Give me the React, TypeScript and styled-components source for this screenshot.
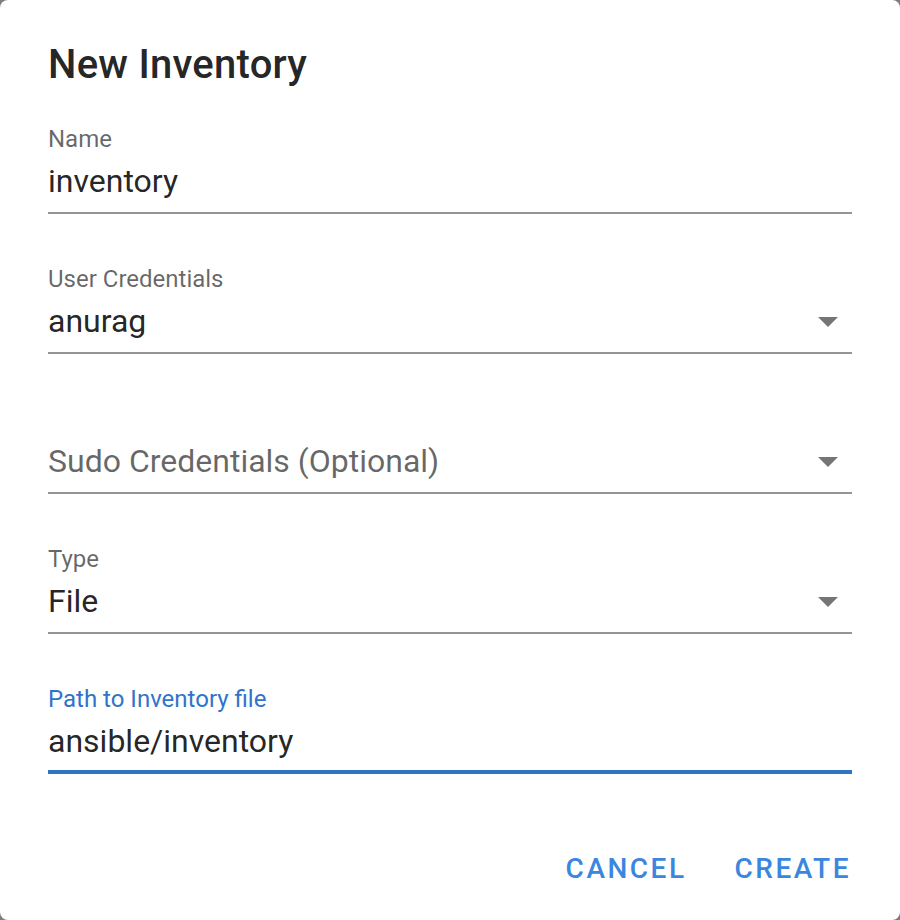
import styled, { createGlobalStyle } from 'styled-components';

const GlobalStyle = createGlobalStyle`
  html, body {
    margin: 0;
    padding: 0;
    background: #7d7d7d;
    font-family: Roboto, "Liberation Sans", Arial, sans-serif;
  }
`;

const Dialog = styled.div`
  width: 900px;
  height: 920px;
  box-sizing: border-box;
  background: #ffffff;
  border-radius: 8px;
  display: flex;
  flex-direction: column;
  overflow: hidden;
`;

const Title = styled.h2`
  margin: 0;
  padding: 33px 48px 0;
  font-size: 40px;
  font-weight: 500;
  line-height: 64px;
  letter-spacing: 0.25px;
  color: rgba(0, 0, 0, 0.87);
`;

const Form = styled.div`
  display: flex;
  flex-direction: column;
  gap: 51px;
  padding: 28px 48px 0;
`;

const Field = styled.div<{ $focused?: boolean }>`
  display: flex;
  flex-direction: column;
  padding-bottom: ${(p) => (p.$focused ? '9px' : '11px')};
  border-bottom: ${(p) =>
    p.$focused ? '4px solid #3074c9' : '2px solid rgba(0, 0, 0, 0.42)'};
`;

const Label = styled.label<{ $focused?: boolean }>`
  font-size: 24px;
  line-height: 28px;
  height: 28px;
  margin-bottom: 8px;
  color: ${(p) => (p.$focused ? '#3074c9' : 'rgba(0, 0, 0, 0.6)')};
`;

const Row = styled.div`
  display: flex;
  align-items: flex-start;
  height: 40px;
`;

const Value = styled.div<{ $placeholder?: boolean }>`
  flex: 1;
  font-size: 32px;
  line-height: 40px;
  color: ${(p) => (p.$placeholder ? 'rgba(0, 0, 0, 0.6)' : 'rgba(0, 0, 0, 0.87)')};
`;

const Arrow = styled.svg`
  width: 48px;
  height: 48px;
  margin-top: -4px;
  margin-bottom: -4px;
  flex: none;
`;

const Actions = styled.div`
  display: flex;
  justify-content: flex-end;
  gap: 16px;
  padding: 59px 33px 0 0;
`;

const TextButton = styled.button`
  height: 72px;
  padding: 0 16px;
  border: none;
  background: transparent;
  font-family: Roboto, "Liberation Sans", Arial, sans-serif;
  font-size: 28px;
  font-weight: 500;
  line-height: 72px;
  letter-spacing: 2.5px;
  text-transform: uppercase;
  color: #3b86de;
  cursor: pointer;
`;

const MenuDown = () => (
  <Arrow viewBox="0 0 24 24">
    <path d="M7 10l5 5 5-5z" fill="rgba(0,0,0,0.54)" />
  </Arrow>
);

type FieldDef = {
  label: string;
  value: string;
  select?: boolean;
  focused?: boolean;
  placeholder?: boolean;
};

const fields: FieldDef[] = [
  { label: 'Name', value: 'inventory' },
  { label: 'User Credentials', value: 'anurag', select: true },
  { label: '', value: 'Sudo Credentials (Optional)', select: true, placeholder: true },
  { label: 'Type', value: 'File', select: true },
  { label: 'Path to Inventory file', value: 'ansible/inventory', focused: true },
];

export default function App() {
  return (
    <>
      <GlobalStyle />
      <Dialog>
        <Title>New Inventory</Title>
        <Form>
          {fields.map((f, i) => (
            <Field key={i} $focused={f.focused}>
              <Label $focused={f.focused}>{f.label}</Label>
              <Row>
                <Value $placeholder={f.placeholder}>{f.value}</Value>
                {f.select && <MenuDown />}
              </Row>
            </Field>
          ))}
        </Form>
        <Actions>
          <TextButton>Cancel</TextButton>
          <TextButton>Create</TextButton>
        </Actions>
      </Dialog>
    </>
  );
}
